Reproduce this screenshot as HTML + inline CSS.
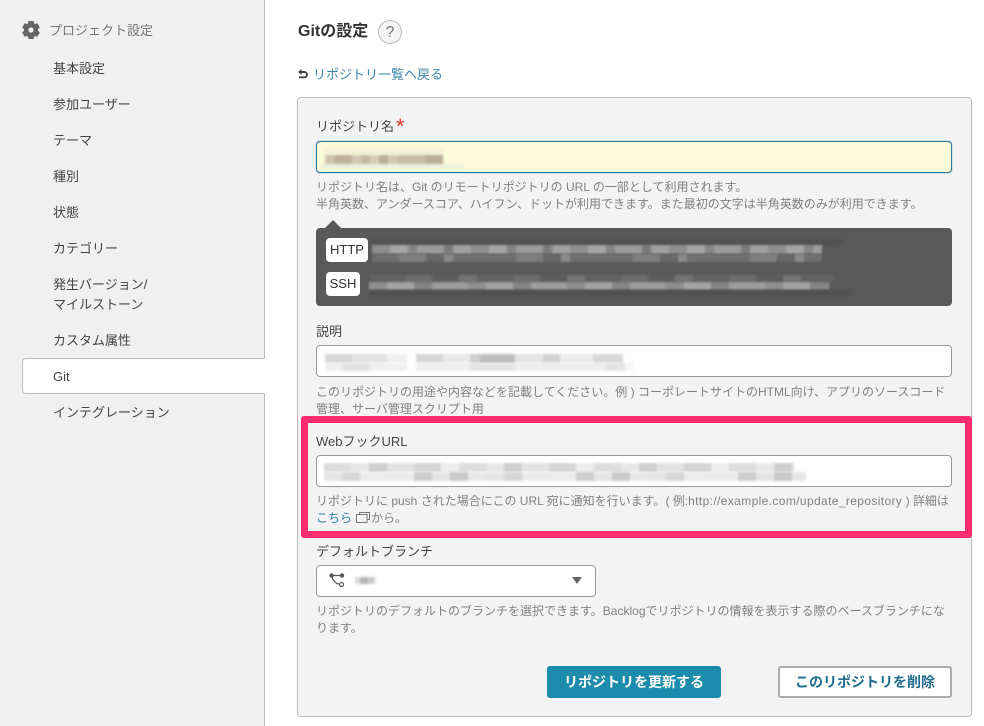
<!DOCTYPE html>
<html lang="ja"><head><meta charset="utf-8"><title>Gitの設定</title>
<style>
html,body{margin:0;padding:0}
body{width:984px;height:726px;position:relative;overflow:hidden;background:#fff;font-family:"Liberation Sans","Noto Sans CJK JP",sans-serif;color:#333}
.a{position:absolute;white-space:nowrap;margin-top:1px}
.nav{left:53px;font-size:13px;line-height:20px;color:#444}
.lab{left:316px;font-size:13px;line-height:20px;color:#444}
.help{left:316px;font-size:12px;line-height:17px;color:#808080}
.inp{position:absolute;left:316px;width:634px;height:30px;background:#fff;border:1px solid #999;border-radius:4px}
.chip{position:absolute;left:326px;height:24px;line-height:24px;background:#fff;border-radius:4px;font-size:13px;text-align:center;color:#333}
.b{position:absolute}
.bl{filter:blur(1px)}
.w{letter-spacing:.37px}
.w2{letter-spacing:.25px}
</style></head><body>
<div class="b" style="left:0;top:0;width:264px;height:726px;background:#f0f0f0;border-right:1px solid #bdbdbd"></div>
<svg class="b" style="left:22px;top:21px" width="18" height="18" viewBox="0 0 18 18"><path fill="#666" fill-rule="evenodd" d="M6.500 0h5l.5 2.400 1 .6 2.300-.8 2.500 4.300-1.800 1.600v1.800l1.800 1.600-2.500 4.300-2.300-.8-1 .6-.5 2.400h-5L6 15.600l-1-.6-2.300.8L.2 11.500 2 9.900V8.100L.2 6.500l2.500-4.300L5 3l1-.6zM9 6.400a2.600 2.600 0 1 0 0 5.200 2.600 2.600 0 0 0 0-5.200z"/></svg>
<div class="a" style="left:49px;top:20px;font-size:13px;line-height:20px;color:#777">プロジェクト設定</div>
<div class="a nav" style="top:58px">基本設定</div>
<div class="a nav" style="top:94px">参加ユーザー</div>
<div class="a nav" style="top:130px">テーマ</div>
<div class="a nav" style="top:166px">種別</div>
<div class="a nav" style="top:202px">状態</div>
<div class="a nav" style="top:238px">カテゴリー</div>
<div class="a nav" style="top:274px">発生バージョン/</div>
<div class="a nav" style="top:294px">マイルストーン</div>
<div class="a nav" style="top:330px">カスタム属性</div>
<div class="b" style="left:22px;top:358px;width:242px;height:34px;background:#fff;border:1px solid #bdbdbd;border-right:0;border-radius:4px 0 0 4px"></div>
<div class="b" style="left:264px;top:359px;width:1px;height:34px;background:#fff"></div>
<div class="a nav" style="top:366px">Git</div>
<div class="a nav" style="top:402px">インテグレーション</div>

<div class="a" style="left:298px;top:20px;font-size:16px;line-height:22px;font-weight:bold;color:#333">Gitの設定</div>
<div class="b" style="left:378px;top:20px;width:22px;height:22px;border:1px solid #bbb;border-radius:50%;background:#f5f5f5;text-align:center;line-height:23px;font-size:16px;color:#777">?</div>
<svg class="b" style="left:297px;top:69px" width="11" height="11" viewBox="0 0 11 11"><path fill="none" stroke="#444" stroke-width="1.900" d="M3 3h4.300a2.500 2.500 0 0 1 0 5.300H2"/><path fill="#444" d="M4.500 0v6L1 3z"/></svg>
<div class="a" style="left:313px;top:64px;font-size:13px;line-height:20px;color:#3b87a8">リポジトリ一覧へ戻る</div>

<div class="b" style="left:297px;top:97px;width:673px;height:618px;background:#f3f3f3;border:1px solid #bbb;border-radius:4px"></div>

<div class="a lab" style="top:116px">リポジトリ名</div>
<div class="a" style="left:396px;top:115px;color:#e8382c;font-size:22px;line-height:22px">*</div>
<div class="inp" style="top:141px;height:30px;background:#fbfad9;border-color:#2c7a9b;box-shadow:0 0 1px #2c7a9b"></div>
<div class="b bl" style="left:325px;top:148px;width:118px;height:7px;background:#f4f1d6"></div>
<div class="b bl" style="left:322px;top:164px;width:142px;height:5px;background:#eaf0dc"></div>
<div class="b bl" style="left:325px;top:155px;width:118px;height:9px;background:linear-gradient(90deg,#cfc3ad 0 9px,#bfb29c 9px 27px,#d3c8b3 27px 36px,#c4b8a3 36px 45px,#d6ccb8 45px 54px,#b9ac97 54px 63px,#d3c8b3 63px 72px,#c8bca8 72px 100px,#b9ad98 100px 118px)"></div>
<div class="a help" style="top:178px">リポジトリ名は、Git のリモートリポジトリの URL の一部として利用されます。</div>
<div class="a help" style="top:195px">半角英数、アンダースコア、ハイフン、ドットが利用できます。また最初の文字は半角英数のみが利用できます。</div>

<div class="b" style="left:316px;top:228px;width:636px;height:78px;background:#595959;border-radius:4px"></div>
<div class="b" style="left:325px;top:220px;width:0;height:0;border:8px solid transparent;border-top:0;border-bottom:8px solid #595959"></div>
<div class="chip" style="top:238px;width:42px">HTTP</div>
<div class="chip" style="top:272px;width:34px">SSH</div>
<div class="b bl" style="left:372px;top:239px;width:470px;height:6px;background:#525252"></div>
<div class="b bl" style="left:372px;top:245px;width:450px;height:9px;background:repeating-linear-gradient(90deg,#8e8e8e 0 18px,#a5a5a5 18px 36px,#858585 36px 45px,#9b9b9b 45px 72px,#7c7c7c 72px 81px,#a0a0a0 81px 99px)"></div>
<div class="b bl" style="left:372px;top:254px;width:450px;height:8px;background:repeating-linear-gradient(90deg,#6f6f6f 0 27px,#7f7f7f 27px 54px,#686868 54px 72px,#8b8b8b 72px 81px,#707070 81px 117px)"></div>
<div class="b bl" style="left:369px;top:275px;width:465px;height:7px;background:repeating-linear-gradient(90deg,#626262 0 36px,#6e6e6e 36px 63px,#5e5e5e 63px 90px,#747474 90px 108px)"></div>
<div class="b bl" style="left:369px;top:282px;width:460px;height:8px;background:repeating-linear-gradient(90deg,#8f8f8f 0 18px,#a3a3a3 18px 45px,#858585 45px 63px,#9c9c9c 63px 99px)"></div>
<div class="b bl" style="left:369px;top:290px;width:482px;height:6px;background:#515151"></div>

<div class="a lab" style="top:321px">説明</div>
<div class="inp" style="top:345px"></div>
<div class="b bl" style="left:325px;top:354px;width:298px;height:9px;background:linear-gradient(90deg,#d8d8d8 0 27px,#e2e2e2 27px 62px,#f0f0f0 62px 82px,#fff 82px 91px,#d6d6d6 91px 118px,#e8e8e8 118px 145px,#cfcfcf 145px 155px,#bdbdbd 155px 190px,#e3e3e3 190px 218px,#d2d2d2 218px 235px,#ececec 235px 268px,#d8d8d8 268px 298px)"></div>
<div class="b bl" style="left:325px;top:363px;width:308px;height:8px;background:linear-gradient(90deg,#eee 0 18px,#e2e2e2 18px 45px,#f0f0f0 45px 82px,#fff 82px 91px,#efefef 91px 145px,#e3e3e3 145px 190px,#ededed 190px 280px,#e4e4e4 280px 300px,#f5f5f5 300px 308px)"></div>
<div class="a help" style="top:383px">このリポジトリの用途や内容などを記載してください。例 ) コーポレートサイトのHTML向け、アプリのソースコード</div>
<div class="a help" style="top:400px">管理、サーバ管理スクリプト用</div>

<div class="b" style="left:301px;top:416px;width:657px;height:108px;border:7px solid #ff2d6f;border-radius:3px"></div>
<div class="a lab" style="top:431px">WebフックURL</div>
<div class="inp" style="top:455px"></div>
<div class="b bl" style="left:324px;top:463px;width:470px;height:9px;background:repeating-linear-gradient(90deg,#ddd 0 27px,#e8e8e8 27px 45px,#cfcfcf 45px 63px,#e2e2e2 63px 90px,#d5d5d5 90px 117px,#ededed 117px 135px)"></div>
<div class="b bl" style="left:324px;top:472px;width:482px;height:9px;background:repeating-linear-gradient(90deg,#e6e6e6 0 18px,#d6d6d6 18px 36px,#ececec 36px 90px,#cdcdcd 90px 108px,#e4e4e4 108px 126px,#c9c9c9 126px 144px,#e8e8e8 144px 162px)"></div>
<div class="a help" style="top:492px">リポジトリに push された場合にこの URL 宛に通知を行います。( 例:<span class="w">http://example.com/update_repository</span> ) 詳細は</div>
<div class="a help" style="top:509px"><span style="color:#2f7ea3">こちら</span></div>
<svg class="b" style="left:355px;top:511px" width="16" height="13" viewBox="0 0 16 13"><path fill="none" stroke="#777" d="M4.500 3V1.500h10v7H12M1.500 3.500h10.500v8h-10.500z"/></svg>
<div class="a help" style="left:371px;top:509px">から。</div>

<div class="a lab" style="top:541px">デフォルトブランチ</div>
<div class="inp" style="top:565px;width:278px"></div>
<svg class="b" style="left:329px;top:573px" width="16" height="15" viewBox="0 0 16 15"><circle cx="2.500" cy="2.500" r="2.200" fill="#555"/><circle cx="13" cy="2.500" r="2.200" fill="#555"/><circle cx="12.500" cy="11.500" r="2" fill="none" stroke="#555" stroke-width="1.200"/><path fill="none" stroke="#555" stroke-width="1.300" d="M2.500 2.500h10.500M3 4c1 4 4 6.500 7.500 7.300"/></svg>
<div class="b bl" style="left:355px;top:577px;width:20px;height:7px;background:linear-gradient(90deg,#ddd 0 5px,#b5b5b5 5px 13px,#ccc 13px 20px)"></div>
<div class="b" style="left:572px;top:577px;width:0;height:0;border:5.500px solid transparent;border-bottom:0;border-top:7px solid #666"></div>
<div class="a help" style="top:602px">リポジトリのデフォルトのブランチを選択できます。Backlogでリポジトリの情報を表示する際のベースブランチにな</div>
<div class="a help" style="top:619px">ります。</div>

<div class="b" style="left:547px;top:666px;width:174px;height:32px;line-height:32px;background:#1b8cab;border-radius:3px;color:#fff;font-size:14px;font-weight:bold;text-align:center">リポジトリを更新する</div>
<div class="b" style="left:778px;top:666px;width:170px;height:28px;line-height:28px;background:#fff;border:2px solid #aaa;border-radius:3px;color:#1f6c8f;font-size:14px;font-weight:bold;text-align:center">このリポジトリを削除</div>
</body></html>
